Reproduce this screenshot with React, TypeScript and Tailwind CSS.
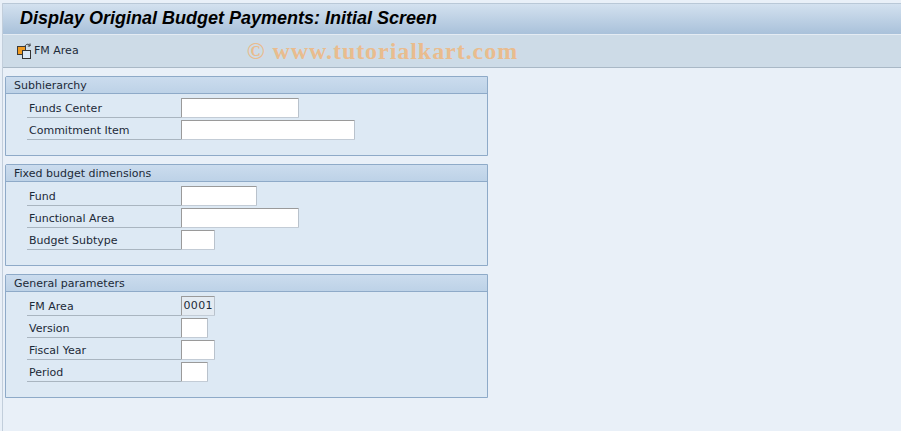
import React from "react";

type Field = { label: string; inputWidth: string; value?: string };

const SECTIONS: { title: string; height: string; fields: Field[] }[] = [
  {
    title: "Subhierarchy",
    height: "h-[80px]",
    fields: [
      { label: "Funds Center", inputWidth: "w-[118px]" },
      { label: "Commitment Item", inputWidth: "w-[174px]" },
    ],
  },
  {
    title: "Fixed budget dimensions",
    height: "h-[102px]",
    fields: [
      { label: "Fund", inputWidth: "w-[76px]" },
      { label: "Functional Area", inputWidth: "w-[118px]" },
      { label: "Budget Subtype", inputWidth: "w-[34px]" },
    ],
  },
  {
    title: "General parameters",
    height: "h-[124px]",
    fields: [
      { label: "FM Area", inputWidth: "w-[34px]", value: "0001" },
      { label: "Version", inputWidth: "w-[27px]" },
      { label: "Fiscal Year", inputWidth: "w-[34px]" },
      { label: "Period", inputWidth: "w-[27px]" },
    ],
  },
];

function AreaIcon() {
  return (
    <svg width="16" height="16" viewBox="0 0 16 16" className="shrink-0">
      <rect x="0.5" y="3.5" width="8" height="8" fill="#f09a20" stroke="#3a3a3a" />
      <rect x="5.5" y="7.5" width="8" height="8" fill="#dbe8f6" stroke="#333333" />
      <path d="M8 3.5 C8.5 1 11.5 0.5 13 2.5 M13 0.5 V3 H10.8" fill="none" stroke="#333333" />
    </svg>
  );
}

function Row({ field }: { field: Field }) {
  return (
    <div className="flex h-[22px] items-end">
      <div className="h-[22px] w-[154px] shrink-0 border-b border-[#a9b5c0] pl-[2px] pt-[5px] leading-[15px] text-[#1c2a38]">
        {field.label}
      </div>
      <div
        className={`${field.inputWidth} h-[20px] rounded-[1px] border border-[#9a9a9a] border-r-[#b9c2cc] border-b-[#c3ccd6] pr-[1px] text-right leading-[18px] tracking-[0.4px] text-[#1c2a38] ${
          field.value ? "bg-[#e4ebf2]" : "bg-white"
        }`}
      >
        {field.value}
      </div>
    </div>
  );
}

function Section({ title, height, fields }: { title: string; height: string; fields: Field[] }) {
  return (
    <section className={`${height} w-[483px] rounded-tl-[2px] border border-[#8eaac8] bg-[#dde9f4]`}>
      <div className="flex h-[17px] items-center border-b border-[#8eaac8] bg-gradient-to-b from-[#cbdcee] to-[#bdd2e7] pl-[8px] pt-[2px] text-[#1c2a38]">
        {title}
      </div>
      <div className="pl-[21px] pt-[2px]">
        {fields.map((f) => (
          <Row key={f.label} field={f} />
        ))}
      </div>
    </section>
  );
}

export default function App() {
  return (
    <div className="h-[431px] w-[901px] overflow-hidden bg-[#e9f0f8] pl-[2px] pt-[3px] font-['DejaVu_Sans',sans-serif] text-[11px]">
      <div className="flex h-full flex-col border-l border-[#c2cedb]">
        {/* Title bar */}
        <div className="flex h-[31px] shrink-0 items-center border-t border-[#b9c8d7] bg-gradient-to-b from-[#d3e1ef] to-[#a9c1da] pb-[2px] pl-[17px] font-['Liberation_Sans',sans-serif] text-[18px] font-bold italic text-black">
          Display Original Budget Payments: Initial Screen
        </div>

        {/* Toolbar */}
        <div className="flex h-[34px] shrink-0 items-center border-y border-t-[#e4ebf3] border-b-[#a9b8c6] bg-[#cddbe7] pl-[14px]">
          <AreaIcon />
          <span className="ml-[1px] text-[#1c2a38]">FM Area</span>
          <span className="ml-[168px] font-['Liberation_Serif',serif] text-[24px] font-bold tracking-[0.95px] text-[#e9bc8e]">
            © www.tutorialkart.com
          </span>
        </div>

        {/* Sections */}
        <div className="flex flex-col gap-[8px] pl-[2px] pt-[8px]">
          {SECTIONS.map((s) => (
            <Section key={s.title} {...s} />
          ))}
        </div>
      </div>
    </div>
  );
}
